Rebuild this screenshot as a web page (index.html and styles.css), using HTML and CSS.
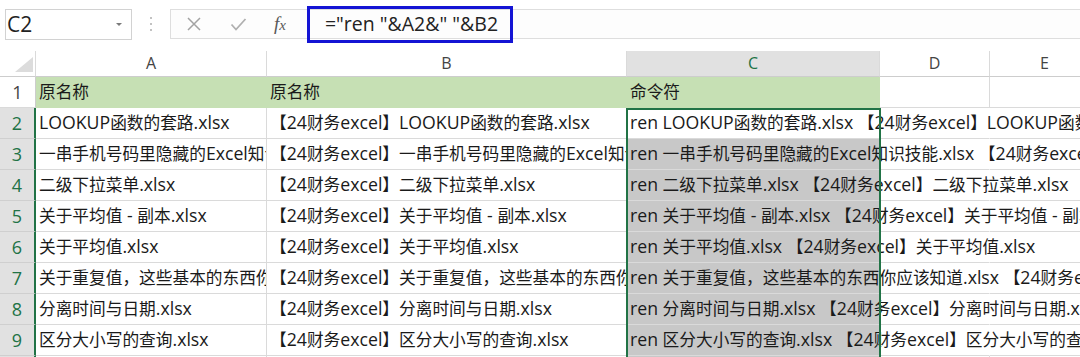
FILE: index.html
```html
<!DOCTYPE html>
<html lang="zh-CN">
<head>
    <meta charset="UTF-8">
    <title>批量重命名 - Excel</title>
    <link rel="stylesheet" href="styles.css">
</head>
<body>

    <div class="formula-bar">
        <div class="name-box">
            <span class="name">C2</span>
            <span class="caret"></span>
        </div>
        <div class="grip"><i></i><i></i><i></i></div>
        <div class="formula-strip">
            <svg class="btn-cancel" width="14" height="14" viewBox="0 0 14 14">
                <path d="M1 1L13 13M13 1L1 13" stroke="#a3a3a3" stroke-width="1.5" fill="none"/>
            </svg>
            <svg class="btn-enter" width="17" height="13" viewBox="0 0 17 13">
                <path d="M1.5 6.5L6 11.5L15.5 1" stroke="#b0b0b0" stroke-width="1.8" fill="none"/>
            </svg>
            <span class="fx">f<span>x</span></span>
            <div class="formula">="ren "&amp;A2&amp;" "&amp;B2</div>
        </div>
    </div>

    <div class="sheet-wrap">
        <table class="sheet">
            <colgroup>
                <col class="w-rh"><col class="w-a"><col class="w-b"><col class="w-c"><col class="w-d"><col class="w-e">
            </colgroup>
            <thead>
                <tr>
                    <th class="corner">
                        <svg width="18" height="15" viewBox="0 0 18 15"><polygon points="18,0 18,15 0,15" fill="#dcdcdc"/></svg>
                    </th>
                    <th>A</th>
                    <th>B</th>
                    <th class="on">C</th>
                    <th>D</th>
                    <th>E</th>
                </tr>
            </thead>
            <tbody id="sheet-body"></tbody>
        </table>
        <div class="selection"></div>
    </div>

    <script>
        const files = [
            'LOOKUP函数的套路.xlsx',
            '一串手机号码里隐藏的Excel知识技能.xlsx',
            '二级下拉菜单.xlsx',
            '关于平均值 - 副本.xlsx',
            '关于平均值.xlsx',
            '关于重复值，这些基本的东西你应该知道.xlsx',
            '分离时间与日期.xlsx',
            '区分大小写的查询.xlsx'
        ];

        // 中文部分单独套一层 span，字号跟英文不一样
        function wrap(text) {
            return text.replace(/[\u3000-\u303f\u4e00-\u9fff\uff00-\uffef]+/g, m => `<span class="cn">${m}</span>`);
        }

        const body = document.getElementById('sheet-body');
        let html = `
            <tr>
                <th>1</th>
                <td class="hd">${wrap('原名称')}</td>
                <td class="hd">${wrap('原名称')}</td>
                <td class="hd">${wrap('命令符')}</td>
                <td></td>
                <td></td>
            </tr>`;

        files.forEach((name, i) => {
            const newName = '【24财务excel】' + name;
            const cmd = 'ren ' + name + ' ' + newName;
            html += `
            <tr>
                <th class="on">${i + 2}</th>
                <td>${wrap(name)}</td>
                <td>${wrap(newName)}</td>
                <td class="c ${i === 0 ? '' : 'sel'}">${wrap(cmd)}</td>
                <td class="spill"></td>
                <td class="spill"></td>
            </tr>`;
        });

        html += `
            <tr>
                <th class="on">10</th>
                <td></td><td></td><td class="c sel"></td><td></td><td></td>
            </tr>`;

        body.innerHTML = html;
    </script>
</body>
</html>
```

FILE: styles.css
```css
body {
    margin: 0;
    height: 357px;
    overflow: hidden;
    background: #fff;
    color: #1a1a1a;
    font-family: "Open Sans", "Noto Sans CJK SC", sans-serif;
}

/* --- 编辑栏 --- */
.formula-bar { display: flex; align-items: flex-start; height: 51px; padding-top: 9px; box-sizing: border-box; }
.name-box {
    display: flex; align-items: center; justify-content: space-between;
    width: 127px; height: 31px; margin-left: 5px; box-sizing: border-box;
    border: 1px solid #d2d2d2; padding: 0 9px 0 1px;
}
.name { font-size: 21px; line-height: 29px; color: #222; }
.caret { width: 0; height: 0; border-left: 3px solid transparent; border-right: 3px solid transparent; border-top: 3px solid #7a7a7a; }
.grip { width: 38px; height: 30px; display: flex; flex-direction: column; align-items: center; justify-content: center; gap: 4px; }
.grip i { display: block; width: 2px; height: 2px; background: #c2c2c2; }
.formula-strip {
    flex: 1; display: flex; align-items: center;
    height: 30px; box-sizing: border-box;
    border: 1px solid #dedede; border-right: none; background: #fdfdfd;
}
.btn-cancel { margin-left: 16px; }
.btn-enter { margin-left: 29px; }
.fx { margin-left: 27px; font-family: "Liberation Serif", serif; font-style: italic; font-size: 19px; color: #595959; }
.fx span { font-size: 15px; }
.formula {
    margin-left: 21px; width: 206px; height: 37px; box-sizing: border-box;
    border: 3px solid #1414d4; padding-left: 15px;
    font-size: 19.5px; line-height: 30px; color: #222; white-space: nowrap;
}

/* --- 表格 --- */
.sheet-wrap { position: relative; }
.sheet { border-collapse: separate; border-spacing: 0; table-layout: fixed; width: 1100px; }
.w-rh { width: 36px; }
.w-a { width: 231px; }
.w-b { width: 360px; }
.w-c { width: 253px; }
.w-d { width: 110px; }
.w-e { width: 110px; }

.sheet th, .sheet td {
    padding: 0; box-sizing: border-box; white-space: nowrap;
    border-right: 1px solid #dadada; border-bottom: 1px solid #dadada;
}
.sheet thead th { height: 26px; font-weight: normal; font-size: 16px; line-height: 25px; color: #444; text-align: center; border-bottom-color: #cdcdcd; }
.sheet thead th.on { background: #e1e1e1; color: #217346; }
.sheet th.corner { text-align: right; vertical-align: bottom; }
.corner svg { display: block; margin: 0 2px 4px auto; }

.sheet tbody th { height: 31px; font-weight: normal; font-size: 18px; line-height: 30px; color: #444; text-align: center; border-right-color: #cdcdcd; }
.sheet tbody th.on { background: #e1e1e1; color: #217346; border-right: 2px solid #217346; border-bottom-color: #cfcfcf; }

.sheet td {
    height: 31px; vertical-align: top; overflow: hidden;
    font-size: 17.7px; line-height: 27px; padding: 1px 0 0 3px;
}
.sheet td.hd { background: #c6e0b4; border-color: #c6e0b4; }
.sheet td.c { overflow: visible; }
.sheet td.sel { background: #c8c8c8; }
.sheet td.spill { border-right-color: transparent; }
.cn { font-family: "Noto Sans CJK SC", sans-serif; font-size: 16.7px; line-height: 1; }

.selection {
    position: absolute; left: 626px; top: 57px; width: 255px; height: 320px;
    border: 2px solid #217346; box-sizing: border-box; pointer-events: none;
}
```
